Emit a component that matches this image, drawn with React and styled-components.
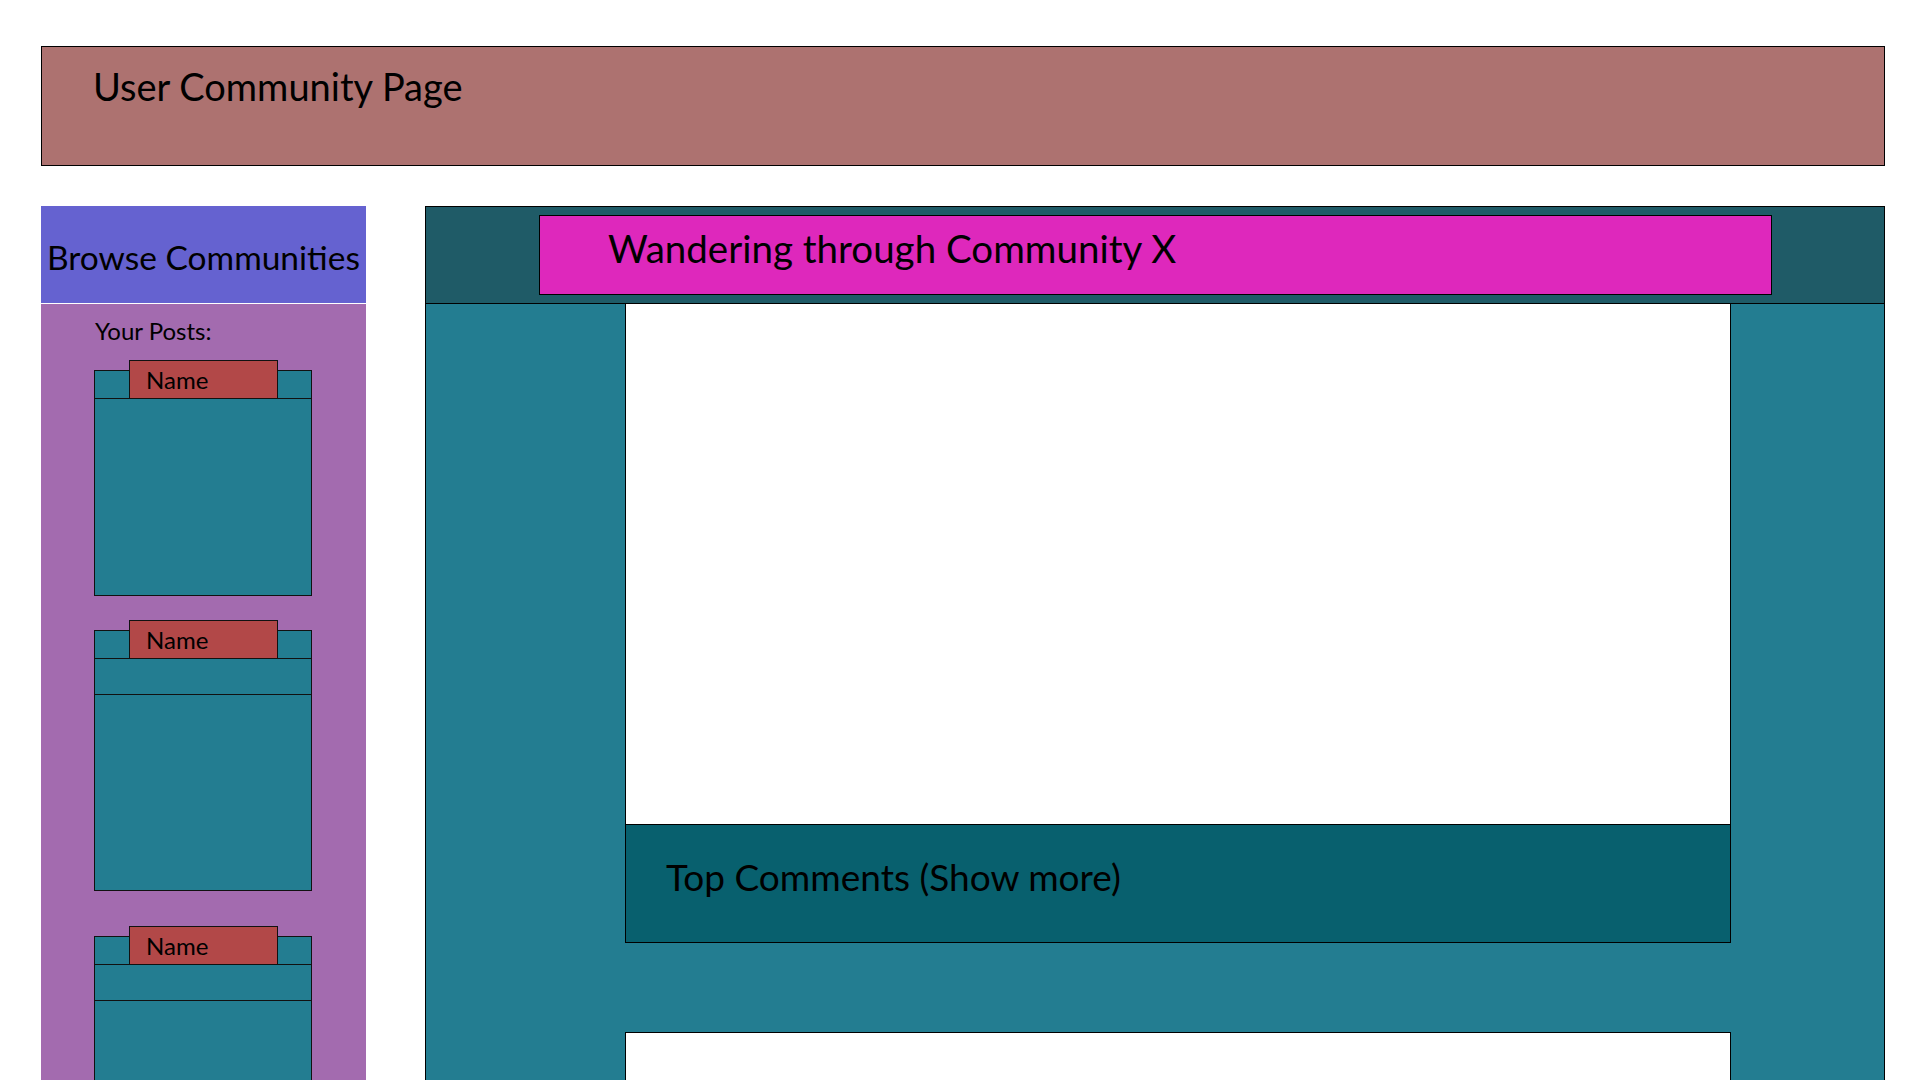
import React from 'react';
import styled, { createGlobalStyle } from 'styled-components';

const GlobalStyle = createGlobalStyle`
  html, body { margin: 0; padding: 0; background: #ffffff; overflow: hidden; }
  body { font-family: Lato, "Open Sans", sans-serif; color: #000; }
  * { box-sizing: border-box; }
`;

const Page = styled.div`
  height: 100vh;
  overflow: hidden;
  padding: 46px 35px 0 41px;
  display: flex;
  flex-direction: column;
  gap: 40px;
`;

const TopBar = styled.header`
  height: 120px;
  flex-shrink: 0;
  background: #ad7270;
  border: 1px solid #000;
  padding: 20px 0 0 51px;
  font-size: 38px;
  line-height: 1;
`;

const Row = styled.div`
  display: flex;
  align-items: stretch;
  gap: 59px;
  flex-shrink: 0;
`;

const Sidebar = styled.aside`
  width: 325px;
  flex-shrink: 0;
  background: #a36baf;
  display: flex;
  flex-direction: column;
`;

const SideHead = styled.div`
  height: 98px;
  background: #6562d0;
  border-bottom: 1px solid #ffffff;
  padding-top: 35px;
  text-align: center;
  font-size: 33.5px;
  line-height: 1;
`;

const Posts = styled.div`
  padding: 15px 0 0 53px;
  display: flex;
  flex-direction: column;
  align-items: flex-start;
`;

const PostsLabel = styled.div`
  font-size: 24px;
  line-height: 1;
  padding-left: 1px;
`;

const Card = styled.div`
  position: relative;
  width: 218px;
  height: ${p => p.$h}px;
  margin-top: ${p => p.$mt}px;
  background: #237d91;
  border: 1px solid #111;
  display: flex;
  flex-direction: column;
`;

const CardHead = styled.div`
  height: 28px;
  border-bottom: 1px solid #111;
  flex-shrink: 0;
`;

const CardRow = styled.div`
  height: 36px;
  border-bottom: 1px solid #111;
  flex-shrink: 0;
`;

const Tab = styled.div`
  position: absolute;
  top: -11px;
  left: 34px;
  width: 149px;
  height: 39px;
  background: #b24848;
  border: 1px solid #111;
  padding: 7px 0 0 16px;
  font-size: 24px;
  line-height: 1;
`;

const Main = styled.main`
  flex: 1;
  background: #237d91;
  border: 1px solid #000;
  display: flex;
  flex-direction: column;
`;

const MainHead = styled.div`
  background: #1f5b67;
  border-bottom: 1px solid #000;
  padding: 8px 112px 8px 113px;
`;

const Banner = styled.div`
  height: 80px;
  background: #de28bc;
  border: 1px solid #000;
  padding: 13px 0 0 68px;
  font-size: 38.5px;
  line-height: 1;
`;

const Feed = styled.div`
  padding: 0 153px 0 199px;
  display: flex;
  flex-direction: column;
`;

const FeedCard = styled.section`
  border: 1px solid #000;
  border-top: ${p => (p.$attached ? 'none' : '1px solid #000')};
  margin-top: ${p => p.$mt}px;
  display: flex;
  flex-direction: column;
`;

const Media = styled.div`
  height: 520px;
  background: #ffffff;
`;

const Comments = styled.div`
  height: 118px;
  background: #08606e;
  border-top: 1px solid #000;
  padding: 33px 0 0 40px;
  font-size: 37px;
  line-height: 1;
`;

const sidePosts = [
  { h: 226, mt: 27, rows: 0 },
  { h: 261, mt: 34, rows: 1 },
  { h: 261, mt: 45, rows: 1 },
];

export default function App() {
  return (
    <>
      <GlobalStyle />
      <Page>
        <TopBar>User Community Page</TopBar>
        <Row>
          <Sidebar>
            <SideHead>Browse Communities</SideHead>
            <Posts>
              <PostsLabel>Your Posts:</PostsLabel>
              {sidePosts.map((p, i) => (
                <Card key={i} $h={p.h} $mt={p.mt}>
                  <CardHead />
                  {p.rows > 0 && <CardRow />}
                  <Tab>Name</Tab>
                </Card>
              ))}
            </Posts>
          </Sidebar>
          <Main>
            <MainHead>
              <Banner>Wandering through Community X</Banner>
            </MainHead>
            <Feed>
              <FeedCard $attached $mt={0}>
                <Media />
                <Comments>Top Comments (Show more)</Comments>
              </FeedCard>
              <FeedCard $mt={89}>
                <Media />
              </FeedCard>
            </Feed>
          </Main>
        </Row>
      </Page>
    </>
  );
}
